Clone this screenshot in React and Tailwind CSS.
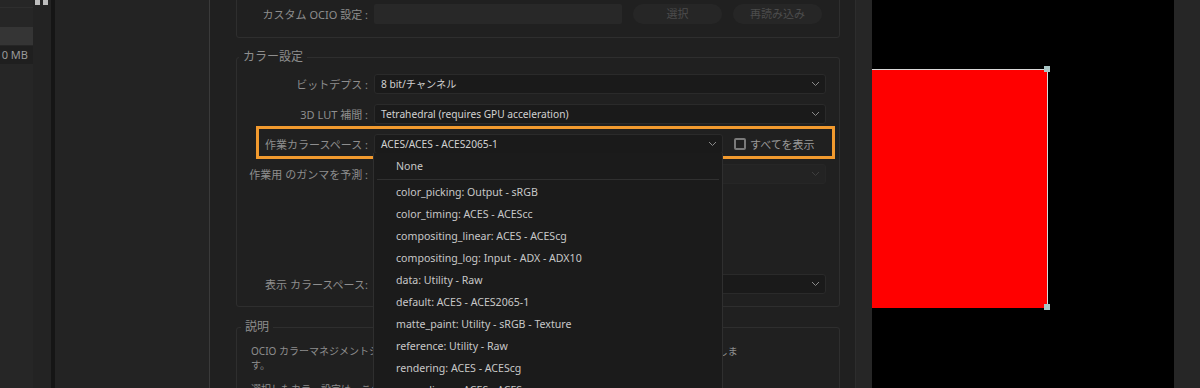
import React from 'react';

const FONT = "font-[family-name:'Noto_Sans','Noto_Sans_CJK_JP',sans-serif]";

const ITEMS = [
  'color_picking: Output - sRGB',
  'color_timing: ACES - ACEScc',
  'compositing_linear: ACES - ACEScg',
  'compositing_log: Input - ADX - ADX10',
  'data: Utility - Raw',
  'default: ACES - ACES2065-1',
  'matte_paint: Utility - sRGB - Texture',
  'reference: Utility - Raw',
  'rendering: ACES - ACEScg',
  'scene_linear: ACES - ACEScg',
];

function Chevron({ dim }) {
  return (
    <svg width="9" height="6" viewBox="0 0 9 6" className="shrink-0">
      <polyline points="1,1 4.5,4.5 8,1" fill="none" stroke={dim ? '#3e3e3e' : '#8a8a8a'} strokeWidth="1" />
    </svg>
  );
}

function Select({ value, dim }) {
  return (
    <div className={`flex-1 h-[20px] flex items-center justify-between pl-[6px] pr-[5px] rounded-[3px] border ${dim ? 'bg-[#232323] border-[#262626]' : 'bg-[#1a1a1a] border-[#2a2a2a]'}`}>
      <span className="text-[10.2px] text-[#d2d2d2] leading-none whitespace-nowrap">{value}</span>
      <Chevron dim={dim} />
    </div>
  );
}

function Row({ label, children, className = '' }) {
  return (
    <div className={`flex items-center h-[20px] ${className}`}>
      <div className="w-[131px] text-right text-[11px] text-[#8e8e8e] whitespace-nowrap leading-none">{label}</div>
      <div className="ml-[6px] flex flex-1 items-center">{children}</div>
    </div>
  );
}

function LeftPanels() {
  return (
    <>
      <div className="w-[33px] shrink-0 bg-[#262626] flex flex-col">
        <div className="h-[8px] border-b border-[#2e2e2e]" />
        <div className="mt-[19px] h-[18px] bg-[#353535]" />
        <div className="mt-[1px] h-[18px] bg-[#1f1f1f] flex items-center justify-end pr-[5px] overflow-hidden">
          <span className="text-[11px] text-[#9a9a9a] whitespace-nowrap">10 MB</span>
        </div>
      </div>
      <div className="w-[18px] shrink-0 bg-[#232323] flex gap-[3px] pl-[2px]">
        <div className="w-[5px] h-[5px] bg-[#bdbdbd]" />
        <div className="w-[5px] h-[5px] bg-[#bdbdbd]" />
      </div>
      <div className="w-[4px] shrink-0 bg-[#151515]" />
      <div className="w-[154px] shrink-0 bg-[#232323]" />
      <div className="w-[1px] shrink-0 bg-[#3a3a3a]" />
    </>
  );
}

function Dropdown() {
  return (
    <div className="absolute left-[163px] top-[153px] w-[350px] h-[240px] pt-[2px] bg-[#1b1b1b] border-x border-[#2f2f2f] text-[10.6px] text-[#c8c8c8]">
      <div className="h-[22px] pl-[22px] flex items-center leading-none">None</div>
      <div className="h-[4px] flex items-center px-[3px]">
        <div className="h-px w-full bg-[#303030]" />
      </div>
      {ITEMS.map((it) => (
        <div key={it} className="h-[22px] pl-[22px] flex items-center leading-none whitespace-nowrap">{it}</div>
      ))}
    </div>
  );
}

function Dialog() {
  return (
    <div className="relative w-[645px] shrink-0 bg-[#202020] overflow-hidden">
      <div className="pl-[26px] w-[630px] -mt-[30px] flex flex-col">
        <div className="border border-[#2e2e2e] rounded-[3px] pt-[33px] pb-[13px] pr-[17px]">
          <Row label="カスタム OCIO 設定 :">
            <div className="w-[248px] h-[20px] bg-[#282828] rounded-[2px]" />
            <div className="ml-[11px] w-[89px] h-[20px] rounded-full bg-[#262626] flex items-center justify-center text-[11px] text-[#4c4c4c]">選択</div>
            <div className="ml-[11px] w-[89px] h-[20px] rounded-full bg-[#262626] flex items-center justify-center text-[11px] text-[#4c4c4c]">再読み込み</div>
          </Row>
        </div>

        <fieldset className="mt-[11px] border border-[#2e2e2e] rounded-[3px] pt-[9px] pb-[12px] pr-[13px] flex flex-col gap-[10px]">
          <legend className="ml-[2px] px-[4px] text-[12px] leading-[16px] text-[#8e8e8e]">カラー設定</legend>
          <Row label="ビットデプス :"><Select value="8 bit/チャンネル" /></Row>
          <Row label="3D LUT 補間 :"><Select value="Tetrahedral (requires GPU acceleration)" /></Row>
          <Row label="作業カラースペース :" className="relative">
            <Select value="ACES/ACES - ACES2065-1" />
            <div className="ml-[11px] w-[92px] flex items-center gap-[4px]">
              <div className="w-[12px] h-[12px] border-2 border-[#7a7a7a] rounded-[2px]" />
              <span className="text-[11px] text-[#9a9a9a] whitespace-nowrap leading-none">すべてを表示</span>
            </div>
            <div className="absolute left-[19px] -right-[9px] -top-[8px] -bottom-[5px] border-[3px] border-[#f29a2e] pointer-events-none" />
          </Row>
          <Row label="作業用 のガンマを予測 :"><Select value="" dim /></Row>
          <div className="h-[70px]" />
          <Row label="表示 カラースペース:"><Select value="ACES - sRGB" /></Row>
        </fieldset>

        <fieldset className="mt-[12px] border border-[#2e2e2e] rounded-[3px] pt-[9px] pb-[20px] h-[120px]">
          <legend className="ml-[4px] px-[4px] text-[12px] leading-[16px] text-[#8e8e8e]">説明</legend>
          <div className="pl-[14px]">
            <p className="text-[10px] leading-[14px] text-[#8e8e8e]">
              <span className="whitespace-nowrap">OCIO カラーマネジメントシステムを使用して、プロジェクト全体での色の管理と変換を行うように設定しま</span>
              <br />す。
            </p>
            <p className="mt-[10px] text-[10px] leading-[14px] text-[#8e8e8e] whitespace-nowrap">選択したカラー設定は、このプロジェクトのすべてのコンポジションに適用されます。</p>
          </div>
        </fieldset>
      </div>
      <Dropdown />
    </div>
  );
}

function Viewer() {
  return (
    <div className="relative w-[302px] shrink-0 bg-black">
      <div className="absolute left-0 top-[69px] w-[176px] h-[239px] bg-[#ff0000] border-t border-r border-[#d9d9d9]" />
      <div className="absolute left-[172px] top-[66px] w-[6px] h-[6px] bg-[#a9c6c6]" />
      <div className="absolute left-[172px] top-[304px] w-[6px] h-[6px] bg-[#a9c6c6]" />
    </div>
  );
}

export default function App() {
  return (
    <div className={`${FONT} flex w-[1200px] h-[388px] overflow-hidden bg-[#232323]`}>
      <LeftPanels />
      <Dialog />
      <div className="w-[1px] shrink-0 bg-[#2d2d2d]" />
      <div className="w-[16px] shrink-0 bg-[#262626]" />
      <Viewer />
      <div className="flex-1 bg-[#262626]" />
    </div>
  );
}
